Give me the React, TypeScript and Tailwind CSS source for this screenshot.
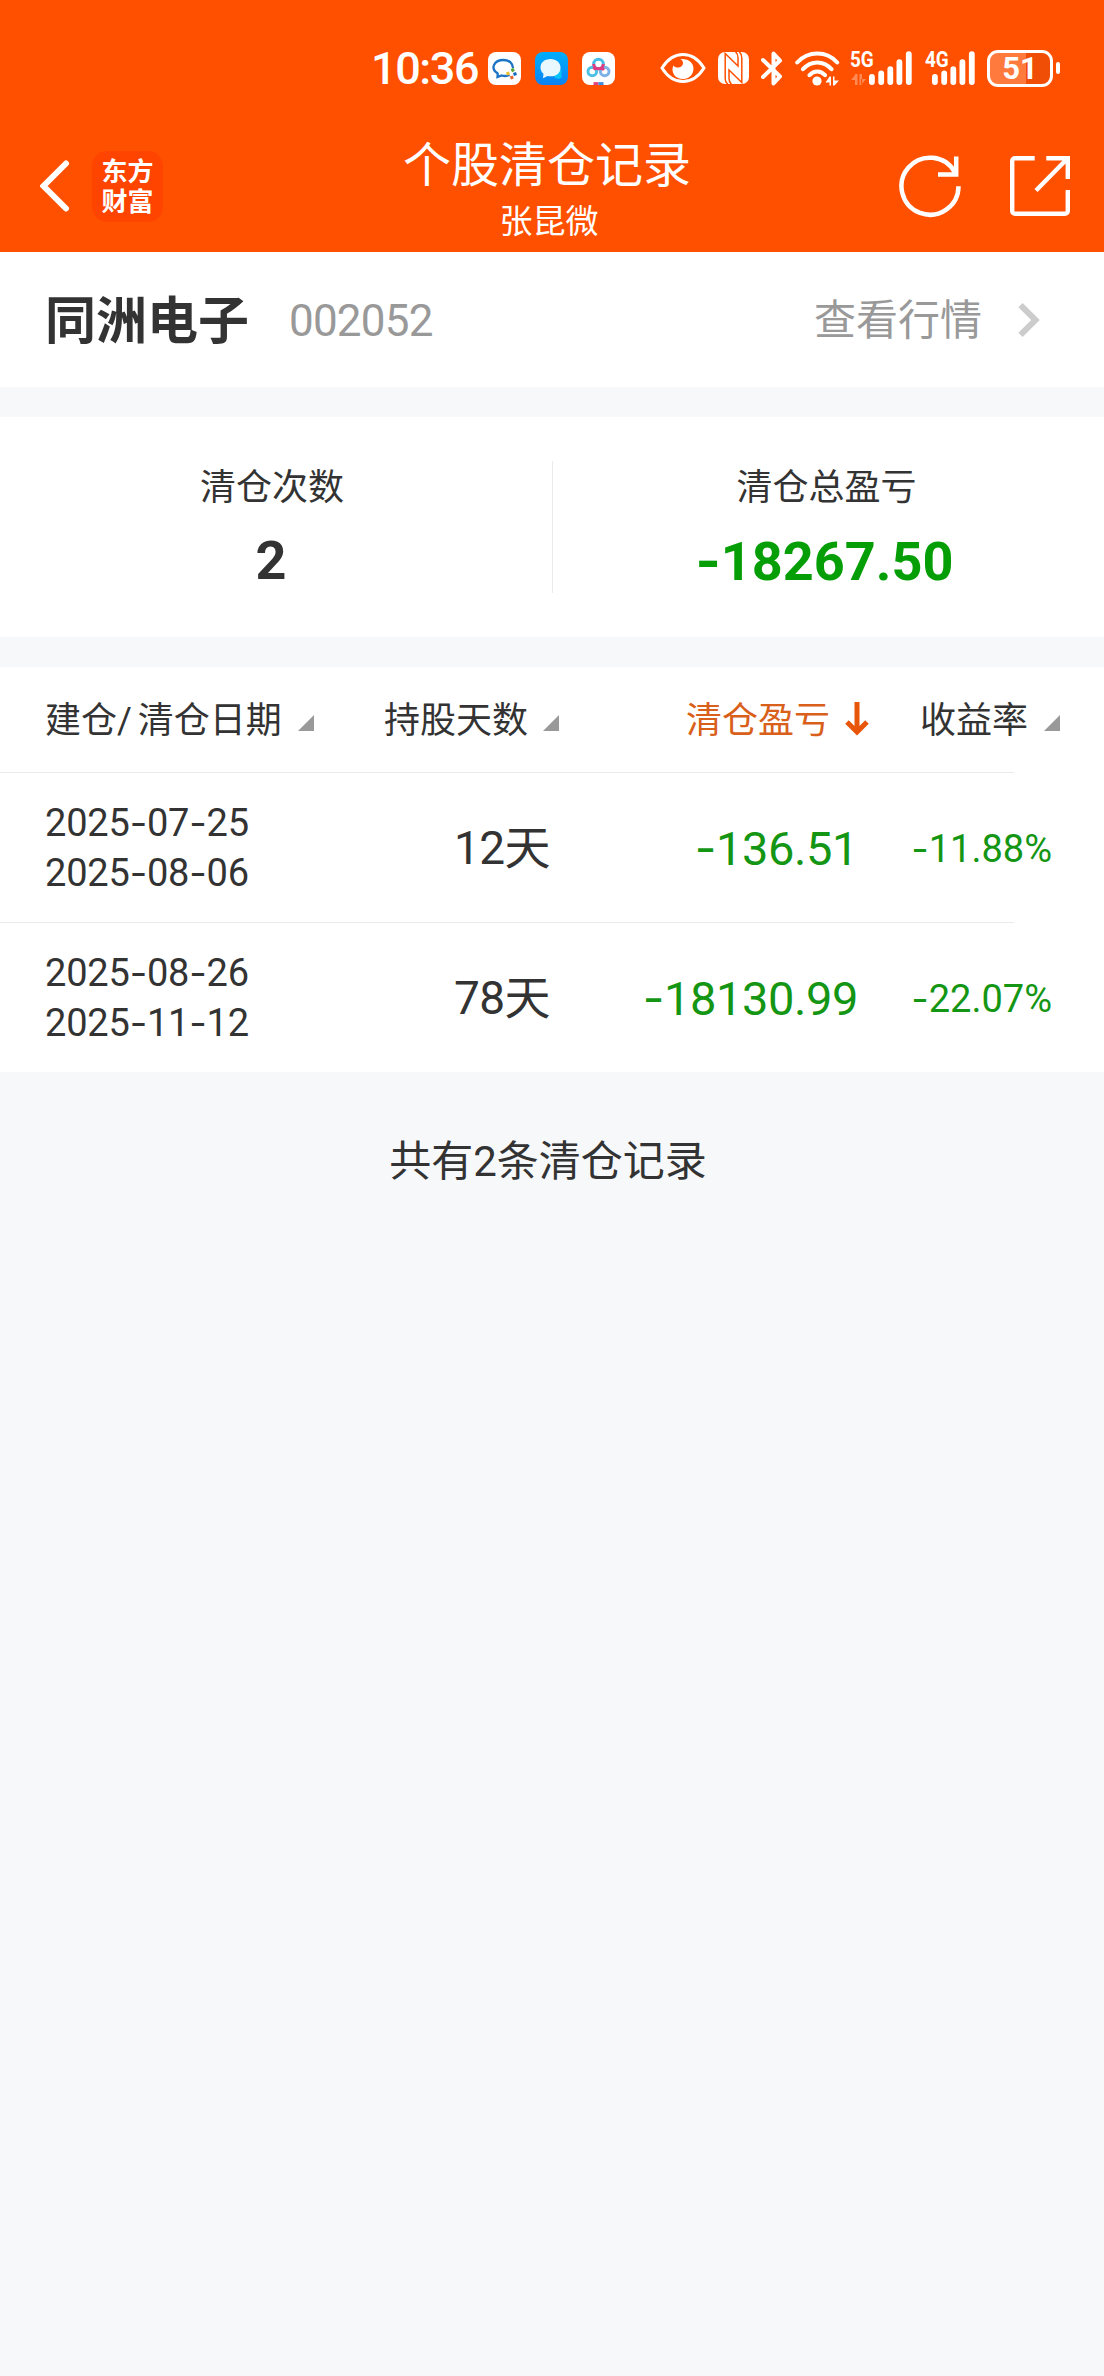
import clsx from 'clsx';

interface IRecord {
  id: string
  opened: string
  closed: string
  days: number
  profit: string
  rate: string
}

const records: IRecord[] = [
  { id: '1', opened: '2025-07-25', closed: '2025-08-06', days: 12, profit: '-136.51', rate: '-11.88%' },
  { id: '2', opened: '2025-08-26', closed: '2025-11-12', days: 78, profit: '-18130.99', rate: '-22.07%' },
];

// Number text, the minus sign is drawn wider than the digits' own font has it
const Num = ({ value }: { value: string }) => (
  <>
    {value.split(/(-)/).filter(Boolean).map((part, index) => (
      part === '-'
        ? <span key={index} className="font-['Inter']">-</span>
        : part
    ))}
  </>
);

const SortMark = ({ className }: { className?: string }) => (
  <svg className={clsx('h-4 w-4 shrink-0', className)} viewBox="0 0 16 16">
    <path d="M16 0v16H0z" fill="#999" />
  </svg>
);

const SignalBars = () => (
  <svg className="h-[34px] w-[43px]" viewBox="0 0 43 34" stroke="#fff" strokeWidth="5.8" strokeLinecap="round">
    <path d="M2.9 26v5M12.2 22.5v8.5M21.3 18.2v12.8M30.4 11.2v19.8M39.8 3.2v27.8" />
  </svg>
);

const StatusBar = () => (
  <div className="flex h-[136px] items-center text-white">
    <span className="ml-[371px] w-[117px] text-[45px] leading-none font-medium tracking-[-1.4px]">10:36</span>

    {/* Notification app icons */}
    <svg className="h-[33px] w-[33px]" viewBox="0 0 33 33">
      <rect width="33" height="33" rx="8" fill="#fff" />
      <path d="M21.500 23c-2 1-5 1.300-8 .5L9.500 25l.2-3.500C1.500 16 6.500 8 15.500 8c6 0 9.500 3.500 9.500 8" fill="none" stroke="#1b74c5" strokeWidth="2.300" />
      <path d="M24 16.500l1.500 3" stroke="#56a637" strokeWidth="3" />
      <path d="M28.500 21.500l-3 1" stroke="#1769c0" strokeWidth="3" />
      <path d="M24.300 27l-1-3" stroke="#e4632c" strokeWidth="3" />
      <path d="M18.500 22l3-1" stroke="#efc02c" strokeWidth="3" />
    </svg>
    <svg className="ml-[14px] h-[33px] w-[33px]" viewBox="0 0 33 33">
      <defs>
        <linearGradient id="chat" x1="0" y1="0" x2="0" y2="1">
          <stop offset="0" stopColor="#00aefc" />
          <stop offset="1" stopColor="#0a82f5" />
        </linearGradient>
      </defs>
      <rect width="33" height="33" rx="8" fill="url(#chat)" />
      <path d="M20 18h6.500v8l-2 .5c-3 .8-6-1-6-4z" fill="#05c3f7" />
      <path d="M15.500 7C9.500 7 5.500 10.500 5.500 15.500c0 3 1.500 5 3 6.300L8 26.300l4.500-2.300C20 25.500 25.500 22 25.500 15.700 25.500 10.500 21.500 7 15.500 7z" fill="#e9f8ff" />
    </svg>
    <svg className="ml-[14px] h-[33px] w-[33px]" viewBox="0 0 33 33" fill="none" strokeWidth="3">
      <rect width="33" height="33" rx="8" fill="#fff" />
      <circle cx="10.300" cy="19.500" r="4.300" stroke="#4ec0e6" />
      <circle cx="22.700" cy="19.500" r="4.300" stroke="#7db2e8" />
      <circle cx="16.500" cy="12" r="4.800" stroke="#45bde8" />
      <path d="M11.700 12a4.800 4.800 0 0 0 9.600 0M13.500 15.500l-2 2M19.500 15.500l2.500 2.500" stroke="#dd3b82" />
      <path d="M11.500 31.600h5" stroke="#e0447c" />
      <path d="M16.500 31.600h5" stroke="#3d8ee0" />
    </svg>

    {/* System icons */}
    <svg className="ml-[45px] h-[32px] w-[46px]" viewBox="0 0 46 32">
      <path d="M2 16C7 8 14 2.500 23 2.500S39 8 44 16c-5 8-12 13.500-21 13.500S7 24 2 16z" fill="none" stroke="#fff" strokeWidth="3" />
      <path d="M20.500 7c9-.5 13 4.500 13 9.500 0 6-4.500 10.500-10.500 10.500-6.500 0-10.500-4.500-10.500-9.500 0-1.500.5-3 1-4 2 3.500 9.500 2.500 9.500-2.500 0-1.500-1-3-2.500-4z" fill="#fff" />
    </svg>
    <svg className="ml-[12px] h-[32px] w-[31px]" viewBox="0 0 31 32" fill="none" stroke="#ff5000" strokeWidth="1.500">
      <rect width="31" height="32" rx="7" fill="#fff" stroke="none" />
      <path d="M10 32c-2-1-2.800-3-2.800-6V1.500L20 14V6c0-3-1-5-2.500-6" />
      <path d="M21 0c2 1 2.800 3 2.800 6v24.500L11 18v8c0 3 1 5 2.500 6" />
    </svg>
    <svg className="ml-[12px] h-[35px] w-[22px]" viewBox="0 0 22 35" fill="none" stroke="#fff" strokeWidth="4" strokeLinejoin="round" strokeLinecap="round">
      <path d="M2 9l17 16.500-6.500 7V2.500l6.500 7L2 26" />
    </svg>
    <svg className="ml-[12px] h-[35px] w-[45px]" viewBox="0 0 45 35" fill="none" stroke="#fff" strokeWidth="4" strokeLinecap="round">
      <path d="M2.200 11.500c11-12 29.500-12 40 0M8 18.200c8-9 20.500-9 28.500 0M14.500 24.200c4.500-5 11-5 15.500 0" />
      <circle cx="22" cy="30" r="4.600" fill="#fff" stroke="none" />
      <path d="M30.500 31.500h4V25.500zM34.500 25.500h1.500v9h-1.500zM38 25.500h1.500v9H38zM39.500 34.500l4.500-5h-4.500z" fill="#fff" stroke="none" />
    </svg>

    {/* Mobile networks */}
    <div className="relative ml-[29px]">
      <span className="absolute top-[-1px] left-[-19px] origin-left scale-x-[0.86] text-[22px] leading-[20px] font-bold">5G</span>
      <svg className="absolute top-[23px] left-[-18px] h-[11px] w-[15px]" viewBox="0 0 15 11" fill="#ff8a55">
        <path d="M0 6l5-6v6zM4 0h2.500v11H4zM8.500 0H11v11H8.500zM10 11l5-6h-5z" />
      </svg>
      <SignalBars />
    </div>
    <div className="relative ml-[20px]">
      <span className="absolute top-[-1px] left-[-7px] origin-left scale-x-[0.86] text-[22px] leading-[20px] font-bold">4G</span>
      <SignalBars />
    </div>

    {/* Battery */}
    <div className="ml-[12px] flex h-[37px] w-[66px] items-center justify-center rounded-[11px] border-[3px] border-white bg-linear-to-r from-[#ff7a3c] from-60% to-[#f04e06] to-60% text-[31px] leading-none font-bold">
      51
    </div>
    <div className="ml-[3px] h-[12px] w-[4px] rounded-full bg-white" />
  </div>
);

const NavBar = () => (
  <div className="flex h-[116px] text-white">
    <div className="flex h-[100px] w-[340px] items-center pl-10">
      <svg className="h-[52px] w-[30px]" viewBox="0 0 30 52" fill="none" stroke="#fff" strokeWidth="6" strokeLinecap="round">
        <path d="M26 3.500L3.500 26 26 48.500" />
      </svg>
      <div className="ml-[22px] flex h-[71px] w-[71px] flex-col items-center justify-center rounded-[15px] bg-[#ff4400] pt-[2px] text-[26px] leading-[30px] font-bold">
        <span>东方</span>
        <span>财富</span>
      </div>
    </div>
    <div className="flex flex-1 flex-col items-center">
      <h1 className="mt-px text-[48px] leading-[58px]">个股清仓记录</h1>
      <p className="ml-1 text-[33px] leading-[54px]">张昆微</p>
    </div>
    <div className="flex h-[100px] w-[350px] items-center justify-end pr-[34px]">
      <svg className="h-[64px] w-[64px]" viewBox="0 0 64 64" fill="none" stroke="#fff" strokeWidth="4.500">
        <path d="M60.500 32.200A28.500 28.500 0 1 1 57 18.500" />
        <path d="M58.200 2.500v18H40" />
      </svg>
      <svg className="ml-[48px] h-[60px] w-[60px]" viewBox="0 0 60 60" fill="none" stroke="#fff" strokeWidth="4.400">
        <path d="M24.700 2.200H5a2.800 2.800 0 0 0-2.800 2.800v50a2.800 2.800 0 0 0 2.800 2.800h50a2.800 2.800 0 0 0 2.800-2.800V34" />
        <path d="M36.300 2.200h21.500V23M57.500 2.500L26 34.500" />
      </svg>
    </div>
  </div>
);

export default function App() {
  return (
    <div className="flex min-h-[2376px] flex-col bg-[#f7f8fa] font-['Roboto','Noto_Sans_CJK_SC',sans-serif] text-[#333]">
      <header className="bg-[#ff5000]">
        <StatusBar />
        <NavBar />
      </header>

      {/* Stock */}
      <div className="flex h-[135px] items-center bg-white pt-[3px] pr-[64px] pl-[45px]">
        <h2 className="text-[51px] leading-none font-bold">同洲电子</h2>
        <span className="ml-[40px] text-[44px] leading-none tracking-[-0.8px] text-[#999]">002052</span>
        <span className="ml-auto text-[42px] leading-none text-[#999]">查看行情</span>
        <svg className="mb-[2px] ml-[36px] h-[34px] w-[22px]" viewBox="0 0 22 34" fill="none" stroke="#ccc" strokeWidth="6">
          <path d="M2.500 2.200L17.500 17 2.500 31.800" />
        </svg>
      </div>

      {/* Totals */}
      <div className="mt-[30px] flex h-[220px] items-center bg-white text-center">
        <div className="w-[552px] pt-[2px] pr-2">
          <div className="text-[36px] leading-[66px]">清仓次数</div>
          <div className="pr-[2px] text-[54px] leading-[80px] font-bold">2</div>
        </div>
        <div className="h-[132px] w-px bg-[#ebebeb]" />
        <div className="flex-1 pt-[2px] pr-1">
          <div className="text-[36px] leading-[66px]">清仓总盈亏</div>
          <div className="pr-[4px] text-[54px] leading-[80px] font-bold text-[#069e06]"><Num value="-18267.50" /></div>
        </div>
      </div>

      {/* Records table */}
      <div className="mt-[30px] bg-white">
        <div className="flex h-[105px] items-center pt-[3px] text-[36px] leading-none">
          <div className="flex w-[384px] items-center pl-[45px] [word-spacing:-3px]">
            建仓/ 清仓日期<SortMark className="mt-[4px] ml-[16px]" />
          </div>
          <div className="flex w-[302px] items-center">
            持股天数<SortMark className="mt-[4px] ml-[15px]" />
          </div>
          <div className="flex w-[234px] items-center text-[#d9601a]">
            清仓盈亏
            <svg className="mb-[4px] ml-[15px] h-[34px] w-[24px]" viewBox="0 0 24 34" fill="none" stroke="#e8560a" strokeWidth="5">
              <path d="M12 0v30M2 20l10 10 10-10" />
            </svg>
          </div>
          <div className="flex items-center">
            收益率<SortMark className="mt-[4px] ml-[16px]" />
          </div>
        </div>
        {records.map(record => (
          <div key={record.id}>
            <div className="h-px w-[1014px] bg-[#ebebeb]" />
            <div className="flex h-[149px] items-center pt-px">
              <div className="w-[300px] pl-[45px] text-[38px] leading-[49px] tracking-[-0.2px]">
                <div><Num value={record.opened} /></div>
                <div><Num value={record.closed} /></div>
              </div>
              <div className="w-[250px] text-right text-[46px] leading-none tracking-[-0.6px]">{record.days}天</div>
              <div className="w-[308px] text-right text-[47px] leading-none tracking-[-0.4px] text-[#149614]"><Num value={record.profit} /></div>
              <div className="w-[194px] text-right text-[38px] leading-none text-[#149614]"><Num value={record.rate} /></div>
            </div>
          </div>
        ))}
      </div>

      <p className="mt-[60px] pr-2 text-center text-[42px] leading-[60px]">共有2条清仓记录</p>
    </div>
  );
}
